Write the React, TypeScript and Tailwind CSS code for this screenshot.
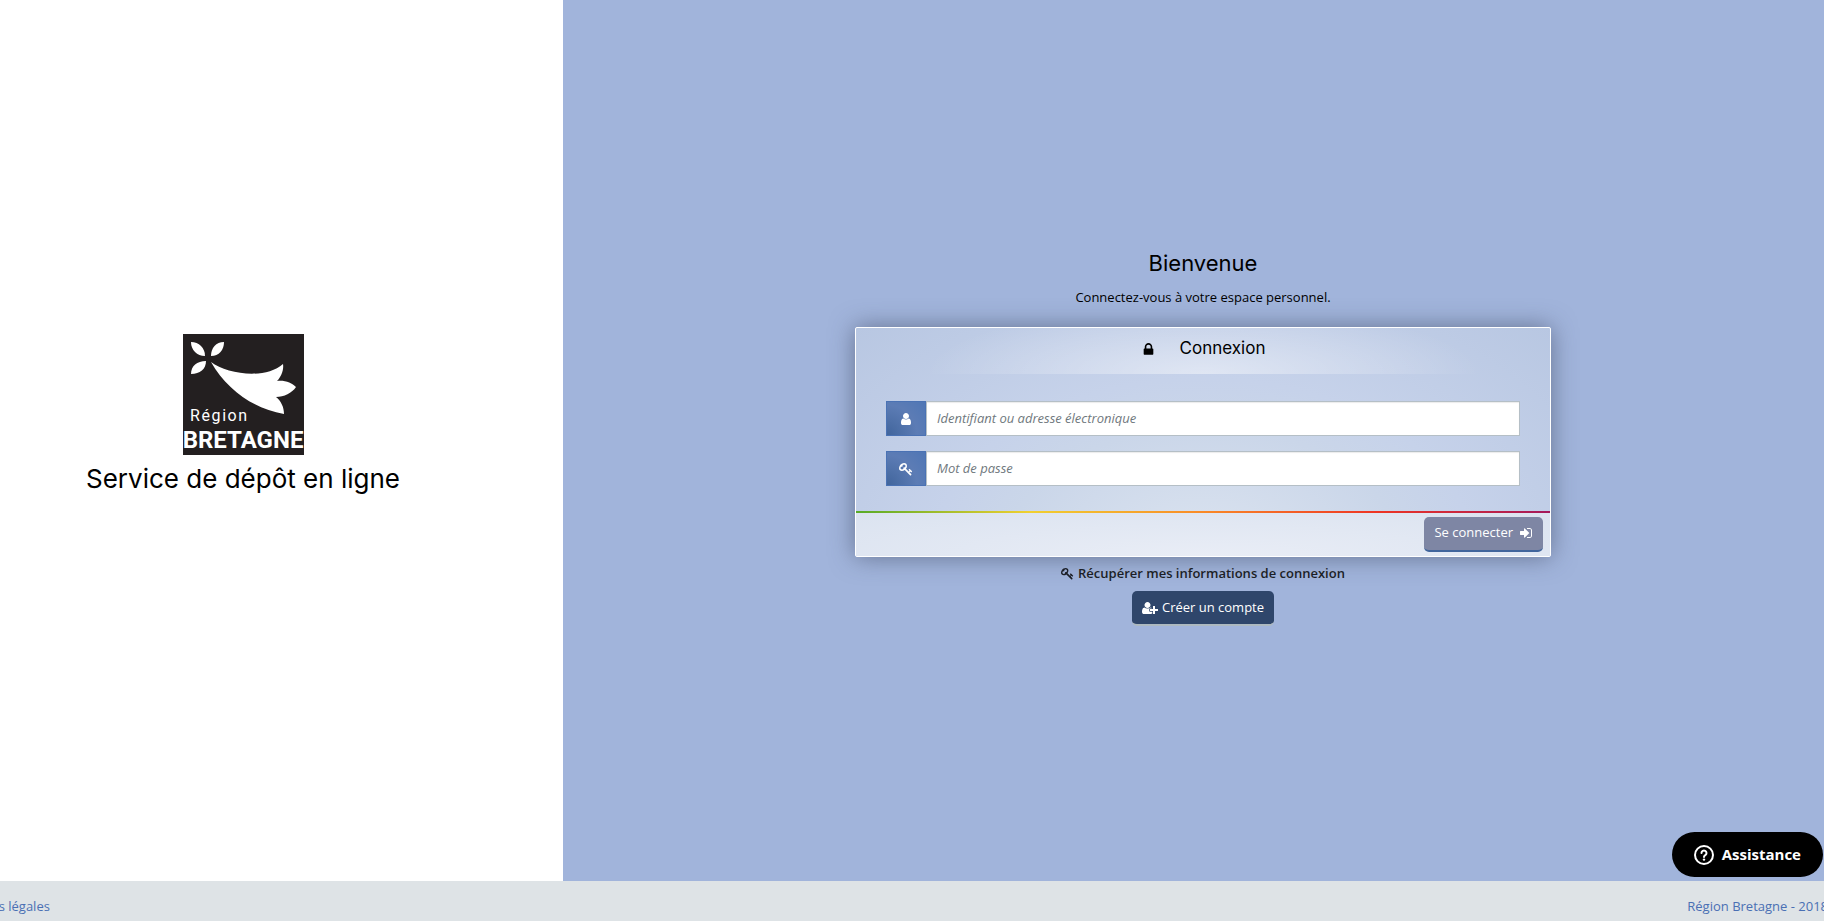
import React, { useState } from "react";

// Icon outlines, drawn on a 1792 unit high grid
const icons = {
  lock: "M640 768h512v-192q0-106-75-181t-181-75-181 75-75 181v192zm832 96v576q0 40-28 68t-68 28h-960q-40 0-68-28t-28-68v-576q0-40 28-68t68-28h32v-192q0-184 132-316t316-132 316 132 132 316v192h32q40 0 68 28t28 68z",
  user: "M1536 1399q0 109-62.5 187t-150.5 78h-854q-88 0-150.5-78t-62.5-187q0-85 8.5-160.5t31.5-152 58.5-131 94-89 134.5-34.5q131 128 313 128t313-128q76 0 134.5 34.5t94 89 58.5 131 31.5 152 8.5 160.5zm-256-887q0 159-112.5 271.5t-271.5 112.5-271.5-112.5-112.5-271.5 112.5-271.5 271.5-112.5 271.5 112.5 112.5 271.5z",
  key: "M832 512q0-80-56-136t-136-56-136 56-56 136q0 42 19 83-41-19-83-19-80 0-136 56t-56 136 56 136 136 56 136-56 56-136q0-42-19-83 41 19 83 19 80 0 136-56t56-136zm851 704q0 17-49 66t-66 49q-9 0-28.5-16t-36.5-33-38.5-40-24.5-26l-96 96 220 220q28 28 28 68 0 42-39 81t-81 39q-40 0-68-28l-671-671q-176 131-365 131-163 0-265.5-102.5t-102.5-265.5q0-160 95-313t248-248 313-95q163 0 265.5 102.5t102.5 265.5q0 189-131 365l355 355 96-96q-3-3-26-24.5t-40-38.5-33-36.5-16-28.5q0-17 49-66t66-49q13 0 23 10 6 6 46 44.5t82 79.5 86.5 86 73 78 28.5 41z",
  signIn: "M1312 896q0 26-19 45l-544 544q-19 19-45 19t-45-19-19-45v-288h-448q-26 0-45-19t-19-45v-384q0-26 19-45t45-19h448v-288q0-26 19-45t45-19 45 19l544 544q19 19 19 45zm352-352v704q0 119-84.5 203.5t-203.5 84.5h-320q-13 0-22.5-9.5t-9.5-22.5q0-4-1-20t-.5-26.5 3-23.5 10-19.5 20.5-6.5h320q66 0 113-47t47-113v-704q0-66-47-113t-113-47h-312l-11.5-1-11.5-3-8-5.5-7-9-2-13.5q0-4-1-20t-.5-26.5 3-23.5 10-19.5 20.5-6.5h320q119 0 203.5 84.5t84.5 203.5z",
  userPlus: "M704 896q-159 0-271.5-112.5t-112.5-271.5 112.5-271.5 271.5-112.5 271.5 112.5 112.5 271.5-112.5 271.5-271.5 112.5zm960 128h352q13 0 22.5 9.5t9.5 22.5v192q0 13-9.5 22.5t-22.5 9.5h-352v352q0 13-9.5 22.5t-22.5 9.5h-192q-13 0-22.5-9.5t-9.5-22.5v-352h-352q-13 0-22.5-9.5t-9.5-22.5v-192q0-13 9.5-22.5t22.5-9.5h352v-352q0-13 9.5-22.5t22.5-9.5h192q13 0 22.5 9.5t9.5 22.5v352zm-736 224q0 52 38 90t90 38h256v238q-68 50-171 50h-874q-121 0-194-69t-73-190q0-53 3.5-103.5t14-109 26.5-108.5 43-97.5 62-81 85.5-53.5 111.5-20q19 0 39 17 79 61 154.5 91.5t164.5 30.5 164.5-30.5 154.5-91.5q20-17 39-17 132 0 217 96h-223q-52 0-90 38t-38 90v192z",
};

interface IconProps {
  name: keyof typeof icons;
  wide?: boolean;
  className?: string;
}

const Icon: React.FC<IconProps> = ({ name, wide, className }) => (
  <svg viewBox={wide ? "0 0 2048 1792" : "0 0 1792 1792"} fill="currentColor" className={className} aria-hidden="true">
    <path d={icons[name]} />
  </svg>
);

const Logo: React.FC = () => (
  <svg viewBox="0 0 121 121" className="w-[121px] h-[121px]" role="img" aria-label="Région Bretagne">
    <rect width="121" height="121" fill="#231f20" />
    <g fill="#fff">
      <path d="M8 8C16 8 22 14 22 22C14 22 8 16 8 8Z" />
      <path d="M41 8C41 16 36 22 28 22C28 14 33 8 41 8Z" />
      <path d="M23 27C23 35 17 40 8 40C8 32 14 27 23 27Z" />
      <path d="M28 28C44 40 82 46 100 30C101 36 98 43 94 47C102 46 109 49 113 53C109 59 101 63 93 63C98 67 101 73 101 80C71 75 44 56 28 28Z" />
    </g>
    <text x="7" y="87" fill="#fff" fontSize="16" className="font-['Roboto'] tracking-widest">Région</text>
    <text x="60" y="114" fill="#fff" fontSize="24" textAnchor="middle" className="font-['Roboto'] font-bold">BRETAGNE</text>
  </svg>
);

interface FieldProps {
  id: string;
  type: string;
  label: string;
  icon: keyof typeof icons;
  value: string;
  onChange: (value: string) => void;
}

const Field: React.FC<FieldProps> = ({ id, type, label, icon, value, onChange }) => (
  <div className="flex h-[35px]">
    <label
      htmlFor={id}
      className="flex w-10 items-center justify-center border border-[#4a72b4] bg-[radial-gradient(circle_at_bottom_left,#41659c,#5c7cb5_60%,#4f76b5)] text-white"
    >
      <Icon name={icon} className="size-[14px]" />
    </label>
    <input
      id={id}
      type={type}
      placeholder={label}
      aria-label={label}
      value={value}
      onChange={(e) => onChange(e.target.value)}
      className="min-w-0 flex-1 border border-[#b5bfc6] bg-white px-2.5 text-[13px] text-[#333] shadow-[inset_0_1px_1px_rgba(0,0,0,0.08)] outline-none placeholder:italic placeholder:text-[#6f787d]"
    />
  </div>
);

const App: React.FC = () => {
  const [login, setLogin] = useState("");
  const [password, setPassword] = useState("");

  return (
    <div className="overflow-x-hidden bg-white font-['Open_Sans',sans-serif] text-[13px] text-black">
      {/* The page bleeds past both sides of the window */}
      <div className="-ml-[77px] -mr-[19px] flex min-h-screen flex-col">
        <main className="grid flex-1 grid-cols-3">
          <section className="flex flex-col items-center justify-center pb-12">
            <Logo />
            <h1 className="mt-1 font-['Inter',sans-serif] text-[26px] leading-10">Service de dépôt en ligne</h1>
          </section>

          <section className="col-span-2 flex flex-col items-center justify-center bg-[#a1b4db] pb-2">
            <h2 className="font-['Inter',sans-serif] text-[22px] leading-8">Bienvenue</h2>
            <p className="mt-2 mb-5 leading-5">Connectez-vous à votre espace personnel.</p>

            <form
              onSubmit={(e) => e.preventDefault()}
              className="w-full max-w-[696px] rounded-xs border border-white bg-[radial-gradient(ellipse_farthest-corner_at_bottom,#dce4f0,#cad6e9_40%,#c6d2ea_55%,#b8c7e2)] shadow-[0_0_24px_rgba(60,70,95,0.6)]"
            >
              <div className="flex h-[46px] items-center justify-center gap-6 bg-[radial-gradient(ellipse_40%_150%_at_bottom,rgba(255,255,255,0.45),rgba(255,255,255,0))] pb-1">
                <Icon name="lock" className="size-[15px]" />
                <h3 className="font-['Inter',sans-serif] text-[17px]">Connexion</h3>
              </div>
              <div className="flex flex-col gap-[15px] px-[30px] pt-[27px] pb-[25px]">
                <Field id="login" type="text" label="Identifiant ou adresse électronique" icon="user" value={login} onChange={setLogin} />
                <Field id="password" type="password" label="Mot de passe" icon="key" value={password} onChange={setPassword} />
              </div>
              <div className="h-0.5 bg-[linear-gradient(to_right,#57ab27,#f0d030_25%,#f98a28_50%,#ee3524_75%,#a3195b)]" />
              <div className="bg-[radial-gradient(ellipse_farthest-corner_at_bottom,#e9edf6,#dbe3f0)] px-[7px] py-1 text-right">
                <button
                  type="submit"
                  className="inline-flex h-[35px] items-center gap-1.5 rounded-[5px] border-b-2 border-[#41659c] bg-[#7e86a4] px-2.5 pb-0.5 align-top font-medium text-white"
                >
                  Se connecter
                  <Icon name="signIn" className="size-[14px]" />
                </button>
              </div>
            </form>

            <a href="#recuperation" className="mt-1.5 flex items-center gap-1 font-semibold leading-5 text-[#1c1f26]">
              <Icon name="key" className="size-[13px]" />
              Récupérer mes informations de connexion
            </a>
            <button
              type="button"
              className="mt-2 flex h-[35px] items-center gap-1 rounded-[5px] border-b-2 border-[#adb9c0] bg-[#2f466b] px-2.5 font-medium text-white"
            >
              <Icon name="userPlus" wide className="h-[14px] w-4" />
              Créer un compte
            </button>
          </section>
        </main>

        <footer className="flex h-10 items-center justify-between bg-[#dee3e6] pt-3 pr-[15px] pl-[25px] text-[#4a70b4]">
          <a href="#mentions">Mentions légales</a>
          <a href="#region">Région Bretagne - 2018</a>
        </footer>
      </div>

      <button
        type="button"
        className="fixed right-px bottom-11 flex h-[45px] items-center gap-2 rounded-full bg-black px-[22px] text-[15px] font-bold text-white"
      >
        <svg viewBox="0 0 20 20" className="size-5" fill="none" stroke="currentColor" strokeWidth="2" aria-hidden="true">
          <circle cx="10" cy="10" r="9" />
          <path d="M7.5 8a2.5 2.5 0 1 1 3.8 2.1c-.8.5-1.3.9-1.3 1.9" strokeLinecap="round" />
          <circle cx="10" cy="14.6" r="1.2" fill="currentColor" stroke="none" />
        </svg>
        Assistance
      </button>
    </div>
  );
};

export default App;
